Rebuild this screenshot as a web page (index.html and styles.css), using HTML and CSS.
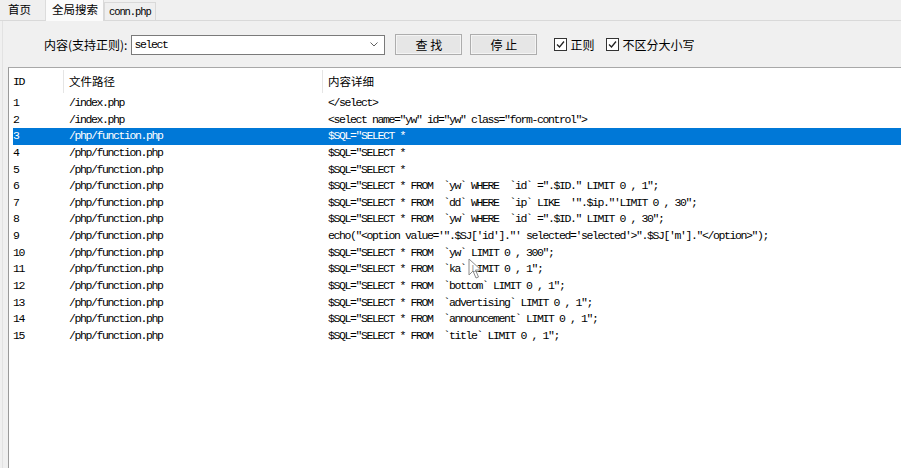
FILE: index.html
```html
<!DOCTYPE html>
<html lang="zh-CN">
<head>
<meta charset="utf-8">
<title>全局搜索</title>
<link rel="stylesheet" href="styles.css">
</head>
<body>
<div class="tabs">
  <div class="tab">首页</div>
  <div class="tab active">全局搜索</div>
  <div class="tab file">conn.php</div>
</div>
<div class="panel">
  <div class="search">
    <span class="label">内容(支持正则):</span>
    <div class="combo">
      <span class="mono">select</span>
      <svg class="chev" width="8" height="5" viewBox="0 0 8 5"><path d="M0.5 0.5 L4 4 L7.5 0.5" fill="none" stroke="#606060" stroke-width="1"/></svg>
    </div>
    <button class="btn first">查 找</button>
    <button class="btn">停 止</button>
    <label class="chk first"><span class="box"><svg width="11" height="11" viewBox="0 0 11 11"><path d="M2 5.5 L4.5 8 L9 2.5" fill="none" stroke="#222" stroke-width="1.3"/></svg></span><span>正则</span></label>
    <label class="chk"><span class="box"><svg width="11" height="11" viewBox="0 0 11 11"><path d="M2 5.5 L4.5 8 L9 2.5" fill="none" stroke="#222" stroke-width="1.3"/></svg></span><span>不区分大小写</span></label>
  </div>
  <div class="list">
    <div class="lhead">
      <div class="hc mono">ID</div>
      <div class="hc">文件路径</div>
      <div class="hc last">内容详细</div>
    </div>
    <div class="rows">
      <div class="row"><span>1</span><span>/index.php</span><span>&lt;/select&gt;</span></div>
      <div class="row"><span>2</span><span>/index.php</span><span>&lt;select name="yw" id="yw" class="form-control"&gt;</span></div>
      <div class="row sel"><span>3</span><span>/php/function.php</span><span>$SQL="SELECT *</span></div>
      <div class="row"><span>4</span><span>/php/function.php</span><span>$SQL="SELECT *</span></div>
      <div class="row"><span>5</span><span>/php/function.php</span><span>$SQL="SELECT *</span></div>
      <div class="row"><span>6</span><span>/php/function.php</span><span>$SQL="SELECT * FROM  `yw` WHERE  `id` =".$ID." LIMIT 0 , 1";</span></div>
      <div class="row"><span>7</span><span>/php/function.php</span><span>$SQL="SELECT * FROM  `dd` WHERE  `ip` LIKE  '".$ip."'LIMIT 0 , 30";</span></div>
      <div class="row"><span>8</span><span>/php/function.php</span><span>$SQL="SELECT * FROM  `yw` WHERE  `id` =".$ID." LIMIT 0 , 30";</span></div>
      <div class="row"><span>9</span><span>/php/function.php</span><span>echo("&lt;option value='".$SJ['id']."' selected='selected'&gt;".$SJ['m']."&lt;/option&gt;");</span></div>
      <div class="row"><span>10</span><span>/php/function.php</span><span>$SQL="SELECT * FROM  `yw` LIMIT 0 , 300";</span></div>
      <div class="row"><span>11</span><span>/php/function.php</span><span>$SQL="SELECT * FROM  `ka` LIMIT 0 , 1";</span></div>
      <div class="row"><span>12</span><span>/php/function.php</span><span>$SQL="SELECT * FROM  `bottom` LIMIT 0 , 1";</span></div>
      <div class="row"><span>13</span><span>/php/function.php</span><span>$SQL="SELECT * FROM  `advertising` LIMIT 0 , 1";</span></div>
      <div class="row"><span>14</span><span>/php/function.php</span><span>$SQL="SELECT * FROM  `announcement` LIMIT 0 , 1";</span></div>
      <div class="row"><span>15</span><span>/php/function.php</span><span>$SQL="SELECT * FROM  `title` LIMIT 0 , 1";</span></div>
    </div>
  </div>
</div>
<svg class="cursor" width="14" height="22" viewBox="0 0 14 22"><path d="M1 1 L1 17 L5 13 L8 20 L10.5 19 L7.5 12 L13 12 Z" fill="#fff" fill-opacity="0.6" stroke="#8a8a8a" stroke-width="1"/></svg>
</body>
</html>
```
FILE: styles.css
```css
html, body {
  margin: 0;
  padding: 0;
}
body {
  width: 901px;
  height: 468px;
  overflow: hidden;
  position: relative;
  background: #f0f0f0;
  font-family: "Noto Sans CJK SC", "Noto Sans", sans-serif;
  font-size: 12px;
  color: #000;
}
.mono {
  font-family: "Liberation Mono", monospace;
  font-size: 11.5px;
  letter-spacing: -1.4px;
}
.tabs {
  display: flex;
  align-items: flex-end;
  height: 20px;
  border-bottom: 1px solid #d9d9d9;
}
.tab {
  box-sizing: border-box;
  height: 20px;
  line-height: 19px;
  font-size: 11.5px;
  padding-left: 8px;
  background: #efefef;
  border-right: 1px solid #dcdcdc;
  width: 46px;
}
.tab.active {
  width: 58px;
  height: 21px;
  margin-bottom: -1px;
  background: #fbfbfb;
  padding-left: 6px;
  border-right: 1px solid #d9d9d9;
}
.tab.file {
  width: 52px;
  height: 18px;
  line-height: 18px;
  padding-left: 4px;
  border: 1px solid #d9d9d9;
  border-bottom: none;
  font-family: "Liberation Mono", monospace;
  font-size: 10.5px;
  letter-spacing: -1.1px;
}
.panel {
  border-left: 1px solid #e2e2e2;
  margin-left: 2px;
}
.search {
  height: 46px;
  display: flex;
  align-items: center;
  padding-left: 41px;
  box-sizing: border-box;
  padding-top: 1px;
}
.label {
  font-size: 12px;
}
.combo {
  box-sizing: border-box;
  width: 254px;
  height: 20px;
  margin-left: 4px;
  border: 1px solid #7a7a7a;
  background: #fff;
  display: flex;
  align-items: center;
  justify-content: space-between;
  padding: 0 6px 0 2px;
}
.btn {
  box-sizing: border-box;
  width: 67px;
  height: 21px;
  padding: 0;
  margin-left: 8px;
  border: 1px solid #adadad;
  background: #e6e6e6;
  box-shadow: inset 0 0 0 1px #f4f4f4;
  font-family: "Noto Sans CJK SC", sans-serif;
  font-size: 12px;
  color: #000;
  line-height: 18px;
}
.btn.first {
  margin-left: 10px;
}
.chk {
  display: flex;
  align-items: center;
  margin-left: 12px;
  font-size: 12px;
}
.chk.first {
  margin-left: 17px;
}
.box {
  box-sizing: border-box;
  width: 13px;
  height: 13px;
  border: 1px solid #333;
  background: #fff;
  display: flex;
  align-items: center;
  justify-content: center;
  margin-right: 3px;
}
.list {
  margin-left: 5px;
  height: 401px;
  background: #fff;
  border-left: 1px solid #9a9a9a;
  border-top: 1px solid #a8a8a8;
}
.lhead {
  display: grid;
  grid-template-columns: 55px 259px 1fr;
  height: 26px;
  align-items: center;
}
.hc {
  height: 23px;
  line-height: 23px;
  padding-left: 5px;
  border-right: 1px solid #e5e5e5;
  font-size: 11.5px;
}
.hc.mono {
  padding-left: 4px;
  font-size: 11.5px;
}
.hc.last {
  border-right: none;
}
.rows {
  padding-top: 1px;
}
.row {
  display: grid;
  grid-template-columns: 51px 259px 1fr;
  margin-left: 4px;
  height: 16.64px;
  line-height: 16.64px;
  font-family: "Liberation Mono", monospace;
  font-size: 11.5px;
  letter-spacing: -1.4px;
  white-space: pre;
}
.row span {
  padding-left: 5px;
}
.row span:first-child {
  padding-left: 0;
}
.row.sel {
  background: #0078d7;
  color: #fff;
}
.cursor {
  position: absolute;
  left: 468px;
  top: 258px;
}
```
